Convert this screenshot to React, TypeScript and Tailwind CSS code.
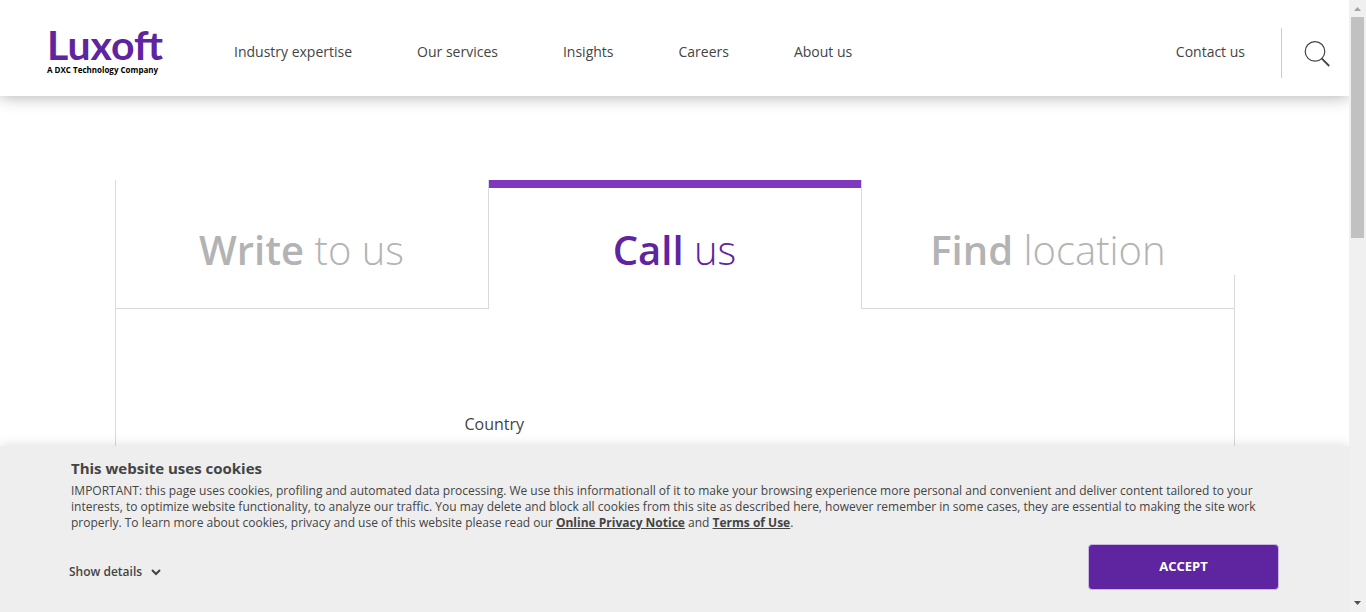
const navLinks = ['Industry expertise', 'Our services', 'Insights', 'Careers', 'About us'];

function Logo() {
  return (
    <a href="#home" className="flex w-[112px] flex-col pb-0.5 text-[#5f249f]">
      <span className="font-['Lato'] text-[41px] leading-9 font-bold">Luxoft</span>
      <span className="mt-0.5 text-[8px] leading-[10px] font-bold whitespace-nowrap text-black">
        A DXC Technology Company
      </span>
    </a>
  );
}

function Header() {
  return (
    <header className="relative z-10 flex h-24 shrink-0 items-center bg-white pt-2 pr-[18px] pl-[47px] shadow-[0_0_16px_rgba(0,0,0,0.35)]">
      <Logo />
      <nav className="ml-[75px] flex gap-[65px] pb-px text-sm whitespace-nowrap text-[#444]">
        {navLinks.map((label) => (
          <a key={label} href="#menu">
            {label}
          </a>
        ))}
      </nav>
      <a href="#contact" className="mr-9 ml-auto pb-px text-sm whitespace-nowrap text-[#444]">
        Contact us
      </a>
      <div className="mt-0.5 flex h-[50px] items-center border-l border-[#c9c9ce] pl-[21px]">
        <button type="button" aria-label="Search" className="block">
          <svg width="28" height="28" viewBox="0 0 28 28" fill="none" stroke="#444">
            <circle cx="12" cy="12.4" r="9.8" strokeWidth="1.2" />
            <path d="M18.6 19.4L26.200 27" strokeWidth="1.8" />
          </svg>
        </button>
      </div>
    </header>
  );
}

function Tabs() {
  return (
    <div role="tablist" className="grid h-[129px] grid-cols-3 text-[40px] leading-[54px] font-light">
      <button role="tab" type="button" className="border-r border-b border-[#d9d9d9] pt-3 text-[#b3b3b3]">
        <b className="font-semibold">Write</b> to us
      </button>
      <button role="tab" type="button" aria-selected="true" className="border-r border-[#d9d9d9] text-[#5f249f]">
        <span className="flex h-full flex-col">
          <span className="h-2 bg-[#7d37c1]" />
          <span className="flex-1 pt-[35px]">
            <b className="font-semibold">Call</b> us
          </span>
        </span>
      </button>
      <button role="tab" type="button" className="relative border-b border-[#d9d9d9] pt-3 text-[#b3b3b3]">
        <b className="font-semibold">Find</b> location
        <span className="absolute right-0 bottom-0 h-[33px] border-r border-[#d9d9d9]" />
      </button>
    </div>
  );
}

function CookieBar() {
  return (
    <section
      aria-label="Cookies"
      className="relative z-10 shrink-0 bg-[#eee] pt-3 pr-[70px] pb-[22px] pl-[69px] text-[#444] shadow-[0_0_12px_rgba(0,0,0,0.15)]"
    >
      <div className="pl-0.5">
        <h2 className="text-[15px] leading-5 font-bold">This website uses cookies</h2>
        <p className="mt-[5px] text-[12px] leading-4">
          IMPORTANT: this page uses cookies, profiling and automated data processing. We use this informationall of it
          to make your browsing experience more personal and convenient and deliver content tailored to your
          interests, to optimize website functionality, to analyze our traffic. You may delete and block all cookies
          from this site as described here, however remember in some cases, they are essential to making the site work
          properly. To learn more about cookies, privacy and use of this website please read our{' '}
          <a href="#privacy" className="font-bold underline">
            Online Privacy Notice
          </a>{' '}
          and{' '}
          <a href="#terms" className="font-bold underline">
            Terms of Use
          </a>
          .
        </p>
      </div>
      <div className="mt-[13px] flex items-center justify-between">
        <button type="button" className="mt-[10px] flex items-center gap-2 text-[12px] leading-4 font-semibold">
          Show details
          <svg width="12" height="8" viewBox="0 0 12 8" fill="none" stroke="#444" strokeWidth="2">
            <path d="M2 2l4 4 4-4" />
          </svg>
        </button>
        <button
          type="button"
          className="h-[46px] w-[191px] rounded border border-[#cbb8e0] bg-[#5f249f] text-[13px] font-bold text-white"
        >
          ACCEPT
        </button>
      </div>
    </section>
  );
}

function ScrollRail() {
  return (
    <div aria-hidden="true" className="relative z-20 flex w-[17px] shrink-0 flex-col items-center bg-[#f0f0f0]">
      <svg width="17" height="17" viewBox="0 0 17 17" fill="#a3a3a3">
        <path d="M5 11h7L8.500 7z" />
      </svg>
      <div className="h-[221px] w-[13px] bg-[#c1c1c1]" />
      <svg className="mt-auto" width="17" height="17" viewBox="0 0 17 17" fill="#505050">
        <path d="M5 6h7L8.500 10z" />
      </svg>
    </div>
  );
}

export default function App() {
  return (
    <div className="flex h-screen bg-white font-['Open_Sans',sans-serif]">
      <div className="flex min-w-0 flex-1 flex-col">
        <Header />
        <main className="flex min-h-0 flex-1 flex-col overflow-hidden pt-[84px]">
          <div className="mx-auto flex w-full max-w-[1120px] flex-1 flex-col border-l border-[#d9d9d9]">
            <Tabs />
            <div className="flex-1 border-r border-[#d9d9d9] pt-[103px] pl-[349px]">
              <span className="text-base text-[#444]">Country</span>
            </div>
          </div>
        </main>
        <CookieBar />
      </div>
      <ScrollRail />
    </div>
  );
}
